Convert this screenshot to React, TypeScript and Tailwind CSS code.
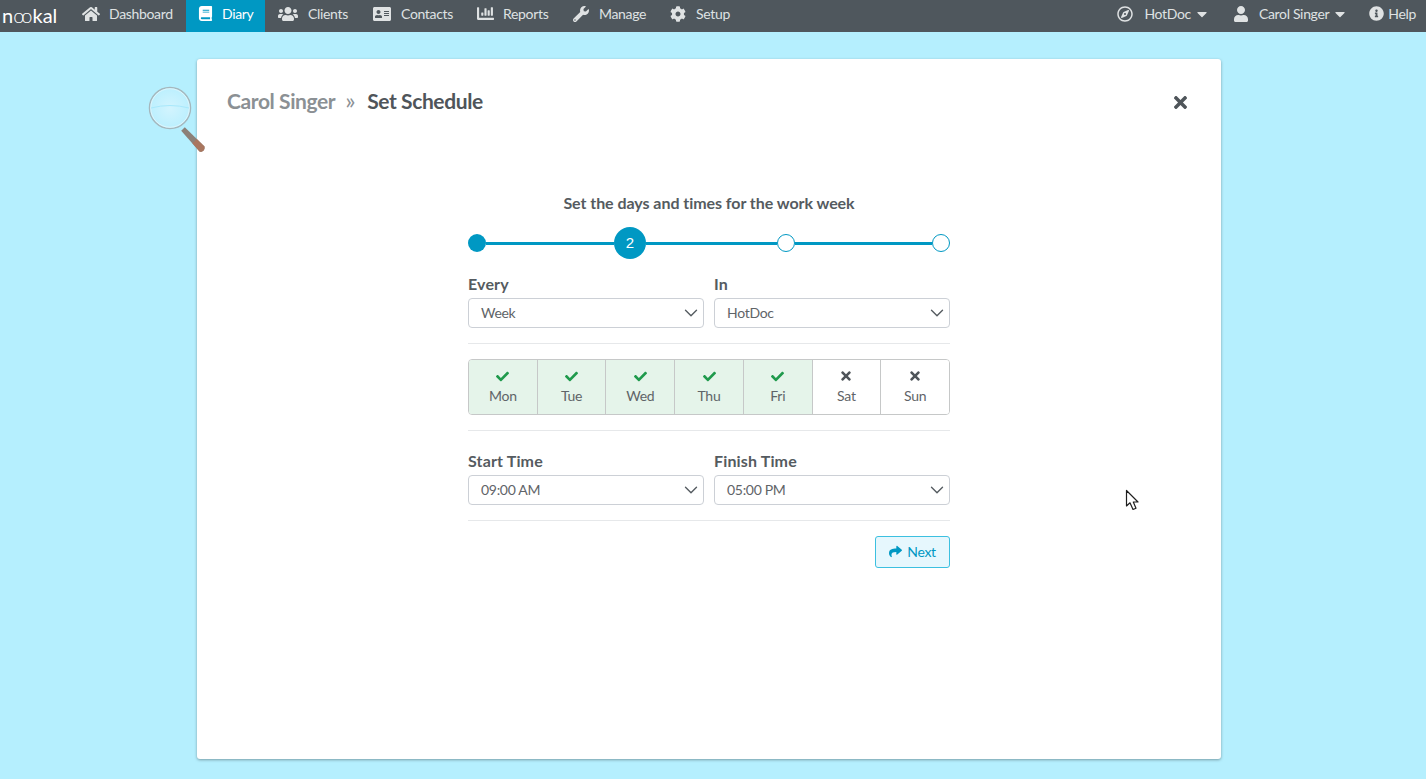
import { ChevronDown } from 'lucide-react'
import {
  FaBook,
  FaCaretDown,
  FaChartBar,
  FaCheck,
  FaCog,
  FaHome,
  FaInfoCircle,
  FaRegCompass,
  FaShare,
  FaTimes,
  FaUser,
  FaUsers,
  FaAddressCard,
  FaWrench,
} from 'react-icons/fa'

const navItems = [
  { label: 'Dashboard', icon: FaHome, box: 'w-[116px] pl-3 gap-[9px]', size: 'text-[18px]' },
  { label: 'Diary', icon: FaBook, active: true, box: 'w-[79px] pl-3 gap-[9px]', size: 'text-[15px]' },
  { label: 'Clients', icon: FaUsers, box: 'w-[96px] pl-[13px] gap-[10px]', size: 'text-[20px]' },
  { label: 'Contacts', icon: FaAddressCard, box: 'w-[104px] pl-3 gap-[10px]', size: 'text-[18px]' },
  { label: 'Reports', icon: FaChartBar, box: 'w-[96px] pl-3 gap-[9px]', size: 'text-[17px]' },
  { label: 'Manage', icon: FaWrench, box: 'w-[97px] pl-3 gap-[10px]', size: 'text-[16px]' },
  { label: 'Setup', icon: FaCog, box: 'w-[80px] pl-3 gap-[10px]', size: 'text-[16px]' },
]

const days = [
  { label: 'Mon', on: true },
  { label: 'Tue', on: true },
  { label: 'Wed', on: true },
  { label: 'Thu', on: true },
  { label: 'Fri', on: true },
  { label: 'Sat', on: false },
  { label: 'Sun', on: false },
]

function Field({ label, value }: { label: string; value: string }) {
  return (
    <div className="w-[236px]">
      <div className="text-[16px] font-bold leading-[20px] tracking-[0.15px] text-[#555b60]">{label}</div>
      <div className="mt-[4px] flex h-[30px] items-center justify-between rounded-[4px] border border-[#ccd0d6] bg-white pl-3 pr-px text-[14px] tracking-[-0.3px] text-[#5f6468]">
        <span className="pb-px">{value}</span>
        <ChevronDown className="size-[22px] text-[#555b60]" strokeWidth={1.5} />
      </div>
    </div>
  )
}

function Magnifier() {
  return (
    <svg className="absolute left-[-49px] top-[26px] h-[72px] w-[62px]" viewBox="0 0 62 72">
      <defs>
        <radialGradient id="lens" cx="50%" cy="50%" r="55%">
          <stop offset="0%" stopColor="#d3f4fe" />
          <stop offset="100%" stopColor="#b9effe" />
        </radialGradient>
      </defs>
      <path d="M33.2 45.7 L36.8 42.3 L56.5 61.6 Q57 66 53.5 66.8 Q52 66.8 51.5 66.4 Z" fill="#8c8078" />
      <path d="M44.4 58.3 L48.8 54.1 L56.5 61.6 Q57 66 53.5 66.8 Q52 66.8 51.5 66.4 Z" fill="#a9765f" />
      <circle cx="22" cy="23" r="20.5" fill="url(#lens)" stroke="#a5b7bd" strokeWidth="1.5" />
      <circle cx="22" cy="23" r="19.3" fill="none" stroke="#e6f8fd" strokeWidth="0.8" />
      <path d="M3 23 Q22 18 41 23" fill="none" stroke="#a8e8fb" strokeWidth="1" />
    </svg>
  )
}

function Cursor() {
  return (
    <svg className="absolute left-[1125px] top-[489px] h-[24px] w-[16px]" viewBox="0 0 16 24">
      <path
        d="M1.5 1.5 V17 L5 13.8 L8 20.5 L11 19.2 L8.3 13 H13 Z"
        fill="#fff"
        stroke="#1f1f1f"
        strokeWidth="1.2"
        strokeLinejoin="round"
      />
    </svg>
  )
}

export default function App() {
  return (
    <div className="relative min-h-[779px] bg-[#b5effe] font-['Lato','Liberation_Sans',sans-serif]">
      <nav className="flex h-8 items-center bg-[#4f575d] text-[14px] tracking-[-0.33px] text-[#dfe2e3]">
        <div className="flex w-[70px] items-center pb-[3px] pl-[2px] text-[20px] leading-none tracking-normal text-white">
          <span>n</span>
          <span className="font-light tracking-[-3px]">oo</span>
          <span className="ml-[3px]">kal</span>
        </div>
        {navItems.map((item) => (
          <div
            key={item.label}
            className={`flex h-8 shrink-0 items-center pb-[5px] ${item.box} ${item.active ? 'bg-[#0098c3] text-white' : ''}`}
          >
            <item.icon className={item.size} />
            <span>{item.label}</span>
          </div>
        ))}
        <div className="ml-auto flex items-center pb-[5px] pr-[10px]">
          <FaRegCompass className="text-[16px]" />
          <span className="ml-[11px]">HotDoc</span>
          <FaCaretDown className="ml-[3px] text-[16px]" />
          <FaUser className="ml-[23px] text-[16px]" />
          <span className="ml-[10px]">Carol Singer</span>
          <FaCaretDown className="ml-[3px] text-[16px]" />
          <FaInfoCircle className="ml-[21px] text-[15px]" />
          <span className="ml-[4px]">Help</span>
        </div>
      </nav>

      <main className="relative ml-[197px] mt-[27px] h-[700px] w-[1024px] rounded-[3px] bg-white shadow-[0_1px_3px_rgba(0,0,0,0.35)]">
        <Magnifier />
        <header className="flex items-center justify-between pl-[30px] pr-[31px] pt-[27px]">
          <h1 className="pb-[2px] text-[21px] font-bold leading-[30px] tracking-[-0.4px] text-[#8b9094]">
            Carol Singer
            <span className="ml-[10px] mr-[12px] text-[24px] leading-[24px] font-normal">»</span>
            <span className="text-[#4f555a]">Set Schedule</span>
          </h1>
          <FaTimes className="text-[19px] text-[#4f555a]" />
        </header>

        <div className="ml-[271px] mt-[75px] w-[482px]">
          <div className="text-center text-[16px] font-bold leading-[20px] tracking-[-0.05px] text-[#555b60]">
            Set the days and times for the work week
          </div>

          <div className="mt-[14px] flex h-8 items-center">
            <div className="size-[18px] rounded-full bg-[#0098c3]" />
            <div className="h-[3px] w-[128px] bg-[#0098c3]" />
            <div className="flex size-8 items-center justify-center rounded-full bg-[#0098c3] font-['Liberation_Sans',sans-serif] text-[15px] text-white">
              2
            </div>
            <div className="h-[3px] w-[131px] bg-[#0098c3]" />
            <div className="size-[18px] rounded-full border-[1.5px] border-[#0098c3] bg-white" />
            <div className="h-[3px] w-[137px] bg-[#0098c3]" />
            <div className="size-[18px] rounded-full border-[1.5px] border-[#0098c3] bg-white" />
          </div>

          <div className="mt-[15px] flex gap-[10px]">
            <Field label="Every" value="Week" />
            <Field label="In" value="HotDoc" />
          </div>

          <div className="mt-[15px] h-px bg-[#e6e8ea]" />

          <div className="mt-[15px] flex h-[56px] overflow-hidden rounded-[4px] border border-[#c6c8c8]">
            {days.map((day) => (
              <div
                key={day.label}
                className={`flex flex-1 flex-col items-center border-r border-[#c6c8c8] pt-[9px] text-[14px] leading-[18px] tracking-[-0.2px] text-[#5f6468] last:border-r-0 ${
                  day.on ? 'bg-[#e5f4ea]' : 'bg-white'
                }`}
              >
                <div className="flex h-[14px] items-center">
                  {day.on ? (
                    <FaCheck className="text-[13px] text-[#1f9a4c]" />
                  ) : (
                    <FaTimes className="text-[14px] text-[#4f555a]" />
                  )}
                </div>
                <span className="mt-[4px]">{day.label}</span>
              </div>
            ))}
          </div>

          <div className="mt-[15px] h-px bg-[#e6e8ea]" />

          <div className="mt-[20px] flex gap-[10px]">
            <Field label="Start Time" value="09:00 AM" />
            <Field label="Finish Time" value="05:00 PM" />
          </div>

          <div className="mt-[15px] h-px bg-[#e6e8ea]" />

          <div className="mt-[15px] flex justify-end">
            <button className="flex h-8 w-[75px] items-center justify-center gap-[5px] rounded-[3px] border border-[#3cc0e0] bg-[#e6f7fd] pb-[2px] text-[14px] tracking-[-0.3px] text-[#0098c3]">
              <FaShare className="text-[13px]" />
              Next
            </button>
          </div>
        </div>
      </main>
      <Cursor />
    </div>
  )
}
